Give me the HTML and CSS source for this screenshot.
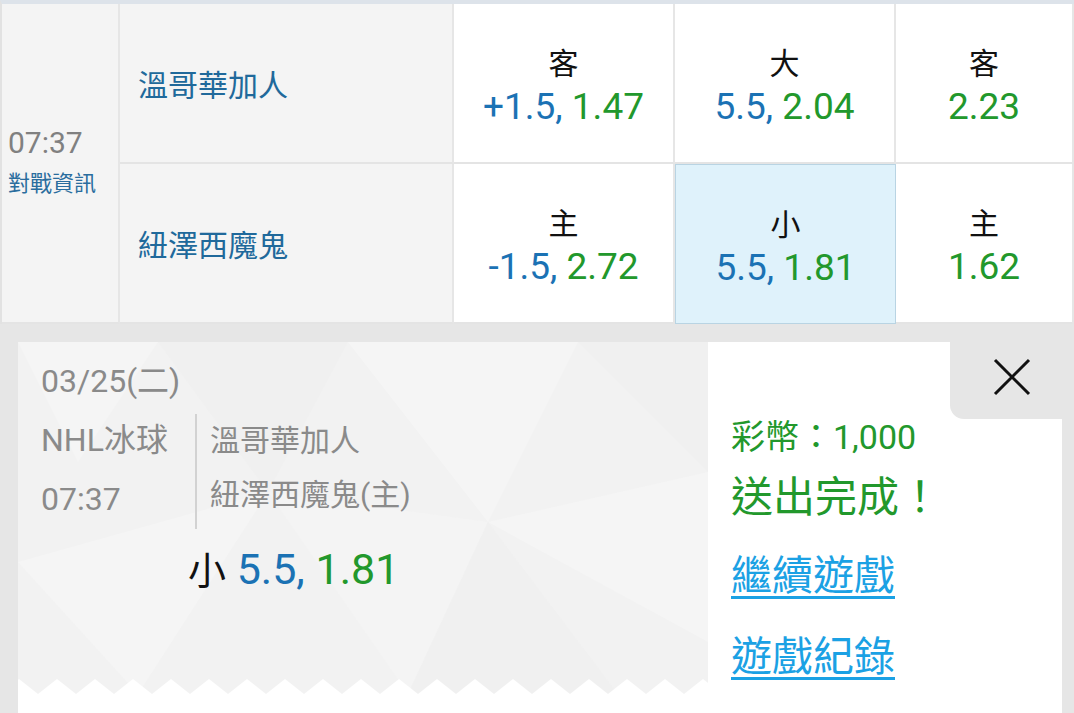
FILE: index.html
```html
<!DOCTYPE html>
<html>

<head>
    <link rel="stylesheet" href="styles.css">
</head>

<body>
    <div class="match">
        <div class="time-cell">
            <div class="time">07:37</div>
            <a class="info">對戰資訊</a>
        </div>
        <div class="team">溫哥華加人</div>
        <div class="odd">
            <div class="lbl">客</div>
            <div class="val"><span class="blue">+1.5,</span> <span class="green">1.47</span></div>
        </div>
        <div class="odd">
            <div class="lbl">大</div>
            <div class="val"><span class="blue">5.5,</span> <span class="green">2.04</span></div>
        </div>
        <div class="odd">
            <div class="lbl">客</div>
            <div class="val"><span class="green">2.23</span></div>
        </div>
        <div class="team">紐澤西魔鬼</div>
        <div class="odd">
            <div class="lbl">主</div>
            <div class="val"><span class="blue">-1.5,</span> <span class="green">2.72</span></div>
        </div>
        <div class="odd selected">
            <div class="lbl">小</div>
            <div class="val"><span class="blue">5.5,</span> <span class="green">1.81</span></div>
        </div>
        <div class="odd">
            <div class="lbl">主</div>
            <div class="val"><span class="green">1.62</span></div>
        </div>
    </div>

    <div class="slip">
        <div class="close-tab">
            <svg width="38" height="38" viewBox="0 0 38 38">
                <path d="M2 2 L36 36 M36 2 L2 36" stroke="#111" stroke-width="3" fill="none" />
            </svg>
        </div>
        <div class="card">
            <div class="ticket">
                <svg class="ticket-bg" width="690" height="352" viewBox="0 0 690 352">
                    <polygon points="0,0 140,0 60,120" fill="#f5f5f5" />
                    <polygon points="140,0 330,0 250,150" fill="#f0f0f0" />
                    <polygon points="330,0 560,0 470,180" fill="#f5f5f5" />
                    <polygon points="560,0 690,0 690,130" fill="#f0f0f0" />
                    <polygon points="250,150 470,180 390,352" fill="#f4f4f4" />
                    <polygon points="470,180 690,130 690,300" fill="#f5f5f5" />
                    <polygon points="0,220 250,150 120,352" fill="#f5f5f5" />
                    <polygon points="470,180 600,352 390,352" fill="#f0f0f0" />
                </svg>
                <div class="date">03/25(二)</div>
                <div class="info-row">
                    <div class="league">
                        <div>NHL冰球</div>
                        <div>07:37</div>
                    </div>
                    <div class="teams">
                        <div>溫哥華加人</div>
                        <div>紐澤西魔鬼(主)</div>
                    </div>
                </div>
                <div class="pick"><span class="pick-lbl">小</span> <span class="blue">5.5,</span> <span class="green">1.81</span></div>
                <svg class="zigzag" width="690" height="15">
                    <defs>
                        <pattern id="zz" x="-18" y="0" width="38" height="15" patternUnits="userSpaceOnUse">
                            <polygon points="0,15 19,0 38,15" fill="#fff" />
                        </pattern>
                    </defs>
                    <rect width="690" height="15" fill="url(#zz)" />
                </svg>
            </div>
            <div class="result">
                <div class="coins">彩幣：1,000</div>
                <div class="done">送出完成！</div>
                <a class="link first">繼續遊戲</a>
                <a class="link">遊戲紀錄</a>
            </div>
        </div>
    </div>
</body>

</html>
```

FILE: styles.css
```css
body {
    margin: 0;
    width: 1074px;
    height: 713px;
    overflow: hidden;
    background: #e6e6e6;
    font-family: Roboto, "Noto Sans CJK TC", sans-serif;
}

.blue {
    color: #1b72b4;
}

.green {
    color: #22982c;
}

/* match table */
.match {
    display: grid;
    grid-template-columns: 118px 334px 221px 221px 1fr;
    grid-template-rows: 160px 160px;
    border-top: 4px solid #dde3ea;
    border-left: 2px solid #e2e2e2;
    background: #fff;
}

.match>div {
    box-sizing: border-box;
    border-bottom: 2px solid #e4e4e4;
    border-right: 2px solid #e6e6e6;
}

.time-cell {
    grid-row: span 2;
    background: #f4f4f4;
    display: flex;
    flex-direction: column;
    justify-content: center;
    padding-left: 6px;
}

.time {
    font-size: 30px;
    line-height: 42px;
    color: #808080;
}

.info {
    font-size: 22px;
    line-height: 40px;
    color: #2a6d9e;
}

.team {
    background: #f4f4f4;
    display: flex;
    align-items: center;
    padding-left: 18px;
    font-size: 30px;
    color: #20699b;
}

.odd {
    display: flex;
    flex-direction: column;
    align-items: center;
    justify-content: center;
    padding-top: 10px;
}

.odd .lbl {
    font-size: 30px;
    line-height: 38px;
    color: #111;
}

.odd .val {
    font-size: 37px;
    line-height: 48px;
}

.odd.selected {
    background: #dff2fb;
    border: 1px solid #b9d4e3;
}

/* bet slip */
.slip {
    position: relative;
    height: 388px;
    padding: 18px 12px 0 18px;
    overflow: hidden;
}

.close-tab {
    position: absolute;
    top: 0;
    right: 0;
    width: 124px;
    height: 95px;
    background: #e6e6e6;
    border-bottom-left-radius: 14px;
    display: flex;
    align-items: center;
    justify-content: center;
    padding-top: 10px;
    box-sizing: border-box;
}

.card {
    display: flex;
    background: #fff;
    height: 420px;
}

.ticket {
    position: relative;
    width: 690px;
    height: 352px;
    box-sizing: border-box;
    padding: 18px 23px 0;
    background: #f2f2f2;
    color: #8a8a8a;
}

.ticket-bg,
.zigzag {
    position: absolute;
    left: 0;
}

.ticket-bg {
    top: 0;
}

.zigzag {
    bottom: 0;
}

.date,
.info-row,
.pick {
    position: relative;
}

.date {
    font-size: 32px;
    line-height: 42px;
}

.info-row {
    display: flex;
    margin-top: 12px;
}

.league {
    width: 154px;
    margin-top: -3px;
    font-size: 32px;
    line-height: 59px;
}

.teams {
    border-left: 2px solid #d2d2d2;
    padding-left: 13px;
    font-size: 30px;
    line-height: 54px;
}

.pick {
    margin-top: 10px;
    padding-left: 147px;
    font-size: 43px;
    line-height: 60px;
}

.pick-lbl {
    color: #111;
    font-size: 38px;
}

.result {
    flex: 1;
    padding: 73px 0 0 23px;
}

.coins {
    font-size: 34px;
    line-height: 44px;
    color: #22982c;
}

.done {
    margin-top: 9px;
    font-size: 42px;
    line-height: 60px;
    color: #22982c;
}

.link {
    display: inline-block;
    margin-top: 21px;
    font-size: 41px;
    line-height: 60px;
    color: #1ba1e4;
    text-decoration: underline;
    text-decoration-thickness: 3px;
    text-underline-offset: 6px;
}

.link.first {
    margin-top: 18px;
}
```
